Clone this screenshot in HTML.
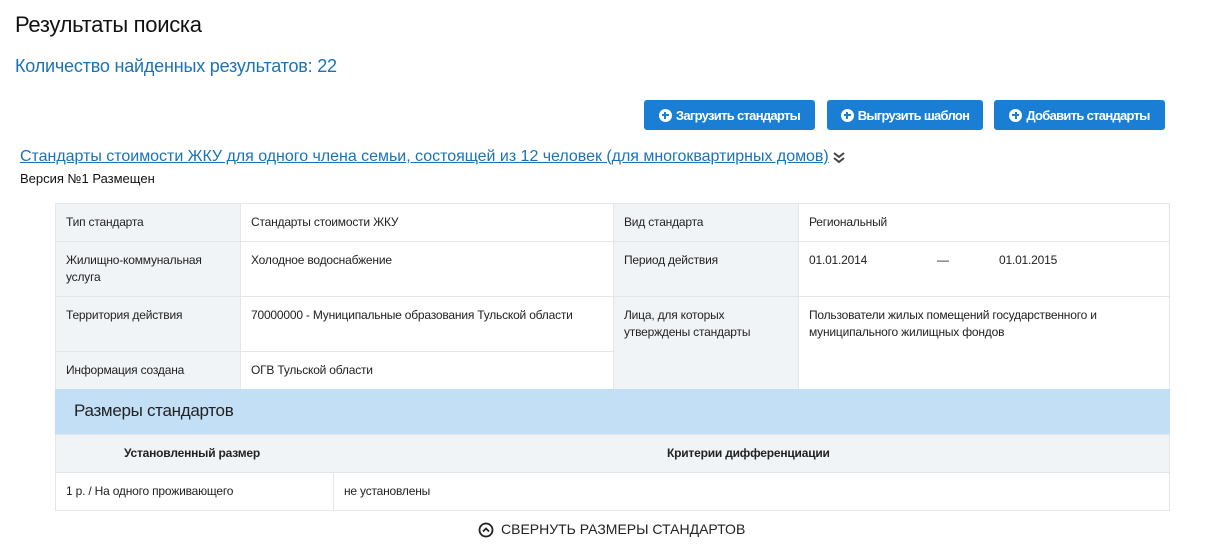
<!DOCTYPE html>
<html><head><meta charset="utf-8"><style>
*{margin:0;padding:0;box-sizing:border-box}
body{width:1207px;height:548px;background:#fff;font-family:"Liberation Sans",sans-serif;color:#222;position:relative;overflow:hidden}
.a{position:absolute;white-space:nowrap}
.btn{position:absolute;top:100px;height:30px;background:#1a7fd4;border-radius:3px;color:#fff;font-size:13px;font-weight:bold;display:flex;align-items:center;justify-content:center;letter-spacing:-0.7px}
.btn i{display:inline-block;width:13px;height:13px;border-radius:50%;background:#fff;margin-right:4px;position:relative}
.btn i:before{content:"";position:absolute;left:3px;top:5.5px;width:7px;height:2px;background:#1a7fd4}
.btn i:after{content:"";position:absolute;left:5.5px;top:3px;width:2px;height:7px;background:#1a7fd4}
.c{position:absolute;border:1px solid #e3e7ea;font-size:12px;padding:10px 10px;line-height:17px;letter-spacing:-0.2px}
.g{background:#f1f4f7}
</style></head><body>
<div class="a" style="left:15px;top:12px;font-size:22px;color:#111;letter-spacing:-0.3px">Результаты поиска</div>
<div class="a" style="left:15px;top:56px;font-size:18px;color:#1a73b8;letter-spacing:-0.2px">Количество найденных результатов: 22</div>
<div class="btn" style="left:644px;width:171px"><i></i>Загрузить стандарты</div>
<div class="btn" style="left:827px;width:156px"><i></i>Выгрузить шаблон</div>
<div class="btn" style="left:994px;width:171px"><i></i>Добавить стандарты</div>
<div class="a" style="left:20px;top:148px;font-size:16px;color:#1a73b8;text-decoration:underline;letter-spacing:-0.02px">Стандарты стоимости ЖКУ для одного члена семьи, состоящей из 12 человек (для многоквартирных домов)</div>
<svg class="a" style="left:832px;top:151px" width="14" height="14" viewBox="0 0 14 14"><path d="M2 2l5 4 5-4M2 7l5 4 5-4" fill="none" stroke="#444" stroke-width="2"/></svg>
<div class="a" style="left:20px;top:171px;font-size:13px;color:#111">Версия №1 Размещен</div>

<div class="c g" style="left:55px;top:203px;width:186px;height:39px">Тип стандарта</div>
<div class="c" style="left:240px;top:203px;width:374px;height:39px">Стандарты стоимости ЖКУ</div>
<div class="c g" style="left:613px;top:203px;width:186px;height:39px">Вид стандарта</div>
<div class="c" style="left:798px;top:203px;width:372px;height:39px">Региональный</div>

<div class="c g" style="left:55px;top:241px;width:186px;height:56px">Жилищно-коммунальная услуга</div>
<div class="c" style="left:240px;top:241px;width:374px;height:56px">Холодное водоснабжение</div>
<div class="c g" style="left:613px;top:241px;width:186px;height:56px">Период действия</div>
<div class="c" style="left:798px;top:241px;width:372px;height:56px">01.01.2014<span style="position:absolute;left:138px">—</span><span style="position:absolute;left:200px">01.01.2015</span></div>

<div class="c g" style="left:55px;top:296px;width:186px;height:56px">Территория действия</div>
<div class="c" style="left:240px;top:296px;width:374px;height:56px">70000000 - Муниципальные образования Тульской области</div>
<div class="c g" style="left:613px;top:296px;width:186px;height:94px">Лица, для которых утверждены стандарты</div>
<div class="c" style="left:798px;top:296px;width:372px;height:94px">Пользователи жилых помещений государственного и муниципального жилищных фондов</div>

<div class="c g" style="left:55px;top:351px;width:186px;height:39px">Информация создана</div>
<div class="c" style="left:240px;top:351px;width:374px;height:39px">ОГВ Тульской области</div>

<div class="a" style="left:55px;top:389px;width:1115px;height:45px;background:#c2dff5;font-size:17px;color:#222;padding:12px 19px;letter-spacing:-0.3px">Размеры стандартов</div>
<div class="c g" style="left:55px;top:434px;width:1115px;height:39px;font-weight:bold"><span style="position:absolute;left:68px">Установленный размер</span><span style="position:absolute;left:611px">Критерии дифференциации</span></div>
<div class="c" style="left:55px;top:472px;width:279px;height:39px">1 р. / На одного проживающего</div>
<div class="c" style="left:333px;top:472px;width:837px;height:39px">не установлены</div>

<svg class="a" style="left:478px;top:522px" width="16" height="16" viewBox="0 0 16 16"><circle cx="8" cy="8" r="6.5" fill="none" stroke="#222" stroke-width="1.8"/><path d="M5 9.5l3-3 3 3" fill="none" stroke="#222" stroke-width="1.8"/></svg>
<div class="a" style="left:501px;top:521px;font-size:14px;color:#222;letter-spacing:0px">СВЕРНУТЬ РАЗМЕРЫ СТАНДАРТОВ</div>
</body></html>
